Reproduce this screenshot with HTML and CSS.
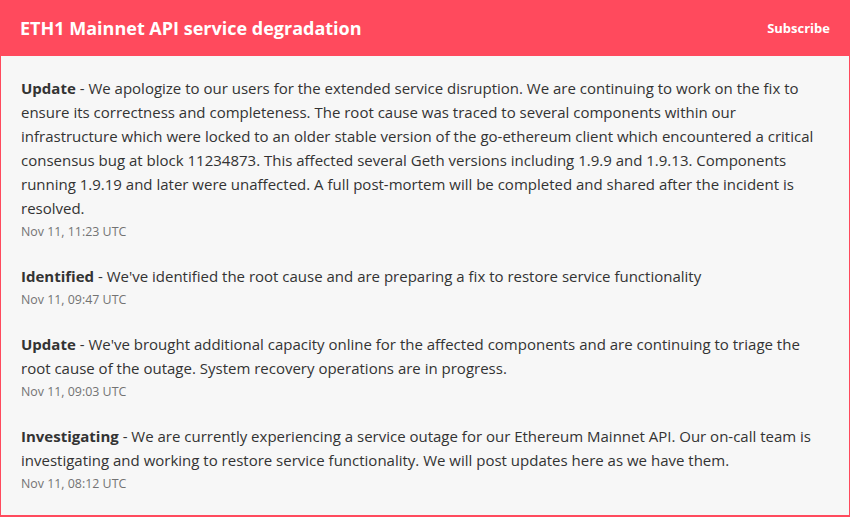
FILE: index.html
```html
<!DOCTYPE html>
<html>
<head>
<meta charset="utf-8">
<link rel="stylesheet" href="styles.css">
</head>
<body>
<div class="incident">
  <div class="header">
    <h1 class="title">ETH1 Mainnet API service degradation</h1>
    <a class="subscribe">Subscribe</a>
  </div>
  <div class="updates">
    <div class="update">
      <p class="text"><strong class="status">Update</strong> - We apologize to our users for the extended service disruption. We are continuing to work on the fix to ensure its correctness and completeness. The root cause was traced to several components within our infrastructure which were locked to an older stable version of the go-ethereum client which encountered a critical consensus bug at block 11234873. This affected several Geth versions including 1.9.9 and 1.9.13. Components running 1.9.19 and later were unaffected. A full post-mortem will be completed and shared after the incident is resolved.</p>
      <div class="time">Nov 11, 11:23 UTC</div>
    </div>
    <div class="update">
      <p class="text"><strong class="status">Identified</strong> - We've identified the root cause and are preparing a fix to restore service functionality</p>
      <div class="time">Nov 11, 09:47 UTC</div>
    </div>
    <div class="update">
      <p class="text"><strong class="status">Update</strong> - We've brought additional capacity online for the affected components and are continuing to triage the root cause of the outage. System recovery operations are in progress.</p>
      <div class="time">Nov 11, 09:03 UTC</div>
    </div>
    <div class="update">
      <p class="text"><strong class="status">Investigating</strong> - We are currently experiencing a service outage for our Ethereum Mainnet API. Our on-call team is investigating and working to restore service functionality. We will post updates here as we have them.</p>
      <div class="time">Nov 11, 08:12 UTC</div>
    </div>
  </div>
</div>
</body>
</html>
```

FILE: styles.css
```css
html, body {
  margin: 0;
  padding: 0;
  background: #ffffff;
}
body {
  font-family: "Open Sans", "Liberation Sans", sans-serif;
}
.incident {
  width: 850px;
  height: 517px;
  box-sizing: border-box;
  display: flex;
  flex-direction: column;
}
.header {
  background: #ff4a5d;
  height: 56px;
  display: flex;
  align-items: center;
  justify-content: space-between;
  padding: 0 20px;
  flex-shrink: 0;
}
.title {
  margin: 0;
  color: #ffffff;
  font-size: 18px;
  font-weight: 700;
}
.subscribe {
  color: #ffffff;
  font-size: 13px;
  font-weight: 700;
}
.updates {
  flex: 1;
  background: #f7f7f7;
  border: 1px solid #ff4a5d;
  border-top: none;
  border-bottom-width: 2px;
  padding: 20px 20px 0 20px;
  display: flex;
  flex-direction: column;
  gap: 20px;
}
.text {
  margin: 0;
  color: #333333;
  font-size: 15px;
  line-height: 24px;
}
.status {
  font-weight: 700;
}
.time {
  color: #737373;
  font-size: 12.4px;
  line-height: 24px;
}
```
